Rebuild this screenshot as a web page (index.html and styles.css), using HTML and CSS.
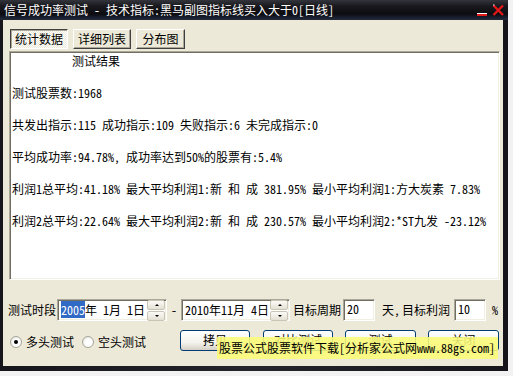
FILE: index.html
```html
<!DOCTYPE html>
<html>
<head>
<meta charset="utf-8">
<link rel="stylesheet" href="styles.css">
</head>
<body>
<div class="window">
  <div class="titlebar">
    <span class="title">信号成功率测试 - 技术指标:黑马副图指标线买入大于0[日线]</span>
    <svg class="ctrls" width="30" height="14" viewBox="0 0 30 14">
      <rect x="2" y="9" width="10" height="3" fill="#e01818"/>
      <rect x="2" y="9" width="10" height="1" fill="#ffffff"/>
      <path d="M18.5 1.5 L28 11 M28 1.5 L18.5 11" stroke="#e01818" stroke-width="2.4" fill="none"/>
      <path d="M18 1 L19.5 1" stroke="#ffffff" stroke-width="1"/>
    </svg>
  </div>
  <div class="body">
    <div class="tabs">
      <div class="tab pressed">统计数据</div>
      <div class="tab">详细列表</div>
      <div class="tab">分布图</div>
    </div>
    <div class="result">          测试结果

测试股票数:1968

共发出指示:115 成功指示:109 失败指示:6 未完成指示:0

平均成功率:94.78%, 成功率达到50%的股票有:5.4%

利润1总平均:41.18% 最大平均利润1:新 和 成 381.95% 最小平均利润1:方大炭素 7.83%

利润2总平均:22.64% 最大平均利润2:新 和 成 230.57% 最小平均利润2:*ST九发 -23.12%</div>
    <div class="row1">
      <span class="lbl l-period">测试时段</span>
      <div class="field date d1"><span class="val"><span class="sel">2005</span>年 1月 1日</span><div class="spin"><div class="sb up"></div><div class="sb dn"></div></div></div>
      <span class="lbl dash">-</span>
      <div class="field date d2"><span class="val">2010年11月 4日</span><div class="spin"><div class="sb up"></div><div class="sb dn"></div></div></div>
      <span class="lbl l-cycle">目标周期</span>
      <div class="field num n1">20</div>
      <span class="lbl l-day">天,</span>
      <span class="lbl l-profit">目标利润</span>
      <div class="field num n2">10</div>
      <span class="lbl l-pct">%</span>
    </div>
    <div class="row2">
      <span class="radio on"></span><span class="lbl r1">多头测试</span>
      <span class="radio r2b"></span><span class="lbl r2">空头测试</span>
      <div class="btn b1">拷贝</div>
      <div class="btn b2">对比测试</div>
      <div class="btn b3">测试</div>
      <div class="btn b4">关闭</div>
    </div>
  </div>
</div>
<div class="tip">股票公式股票软件下载[分析家公式网www.88gs.com]</div>
</body>
</html>
```

FILE: styles.css
```css
html, body {
  margin: 0;
  padding: 0;
  background: #f2f2f2;
}
body {
  width: 513px;
  height: 376px;
  overflow: hidden;
  position: relative;
  font-family: "Noto Sans Mono CJK SC", "Noto Sans CJK SC", monospace;
  font-size: 12px;
  color: #000;
}
.window {
  width: 508px;
  height: 371px;
  background: linear-gradient(90deg, #15151b, #24242c 50%, #15151b);
  display: flex;
  flex-direction: column;
}
.titlebar {
  height: 20px;
  flex: none;
  display: flex;
  align-items: center;
  background: linear-gradient(#34343c 0, #18181e 30%, #0c0c10 70%, #1a2232 90%, #232a3a 100%);
}
.title {
  color: #fff;
  padding-left: 4px;
  line-height: 12px;
  white-space: pre;
}
.ctrls {
  margin-left: auto;
  margin-right: 3px;
  margin-top: 1px;
}
.body {
  flex: 1;
  margin: 0 5px 5px 3px;
  background: #ece9d8;
  padding-top: 9px;
  display: flex;
  flex-direction: column;
}
.tabs {
  display: flex;
  gap: 5px;
  padding-left: 7px;
  height: 20px;
  margin-bottom: 2px;
}
.tab {
  width: 58px;
  height: 20px;
  box-sizing: border-box;
  display: flex;
  align-items: center;
  justify-content: center;
  border: 1px solid;
  border-color: #fff #404040 #404040 #fff;
  box-shadow: inset -1px -1px 0 #aca899;
  line-height: 12px;
}
.tab:nth-child(3) { width: 49px; }
.tab.pressed {
  border-color: #404040 #fff #fff #404040;
  box-shadow: inset 1px 1px 0 #aca899;
  background: repeating-conic-gradient(#ffffff 0 25%, #ece9d8 0 50%) 0 0 / 2px 2px;
}
.result {
  margin-left: 6px;
  width: 491px;
  height: 229px;
  box-sizing: border-box;
  background: #fff;
  border: 1px solid;
  border-color: #aca899 #fff #fff #aca899;
  box-shadow: inset 1px 1px 0 #716f64, inset -1px -1px 0 #f1efe2;
  padding: 1px 0 0 2px;
  white-space: pre;
  line-height: 16px;
}
.row1 {
  display: flex;
  align-items: center;
  height: 22px;
  margin-top: 19px;
}
.lbl {
  white-space: pre;
  line-height: 12px;
}
.l-period { margin-left: 5px; width: 48px; }
.field {
  height: 22px;
  box-sizing: border-box;
  background: #fff;
  border: 1px solid;
  border-color: #aca899 #fff #fff #aca899;
  box-shadow: inset 1px 1px 0 #716f64, inset -1px -1px 0 #f1efe2;
  display: flex;
  align-items: center;
}
.date { position: relative; }
.d1 { margin-left: 1px; width: 110px; }
.d2 { width: 109px; }
.val { padding-left: 3px; white-space: pre; line-height: 14px; }
.sel { background: #316ac5; color: #fff; }
.dash { width: 14px; text-align: center; }
.spin {
  margin-left: auto;
  margin-right: 1px;
  width: 18px;
  display: flex;
  flex-direction: column;
  gap: 1px;
}
.sb {
  height: 8px;
  background: linear-gradient(#fbfaf6, #e3e0d3);
  border: 1px solid #c9c5b6;
  border-radius: 2px;
  position: relative;
}
.sb::after {
  content: "";
  position: absolute;
  left: 7px;
  top: 3px;
  border-left: 2px solid transparent;
  border-right: 2px solid transparent;
}
.sb.up::after { border-bottom: 2px solid #000; }
.sb.dn::after { border-top: 2px solid #000; }
.l-cycle { margin-left: 3px; width: 48px; }
.num { padding-left: 3px; line-height: 14px; align-items: flex-start; padding-top: 2px; }
.n1 { margin-left: 2px; width: 32px; }
.l-day { margin-left: 7px; }
.l-profit { margin-left: 2px; }
.n2 { margin-left: 4px; width: 32px; }
.l-pct { margin-left: 6px; }
.row2 {
  display: flex;
  align-items: center;
  height: 21px;
  margin-top: 9px;
}
.radio {
  width: 12px;
  height: 12px;
  box-sizing: border-box;
  border-radius: 50%;
  border: 1px solid #a5a59a;
  background: radial-gradient(circle at 60% 60%, #fff 40%, #dcdad0 100%);
  margin-left: 7px;
  margin-top: 2px;
  position: relative;
}
.radio.on::after {
  content: "";
  position: absolute;
  left: 3px;
  top: 3px;
  width: 4px;
  height: 4px;
  border-radius: 50%;
  background: #000;
}
.r1 { margin-left: 4px; margin-top: 2px; }
.r2b { margin-left: 8px; }
.r2 { margin-left: 4px; margin-top: 2px; }
.btn {
  height: 21px;
  box-sizing: border-box;
  border: 1px solid #003c74;
  border-radius: 3px;
  background: linear-gradient(#ffffff 0, #f4f3ee 60%, #d6d0c5 100%);
  display: flex;
  align-items: center;
  justify-content: center;
  line-height: 12px;
  padding-bottom: 2px;
}
.b1 { margin-left: 34px; width: 70px; }
.b2 { margin-left: 13px; width: 70px; }
.b3 { margin-left: 12px; width: 71px; }
.b4 { margin-left: 12px; width: 71px; }
.tip {
  position: absolute;
  left: 217px;
  top: 337px;
  width: 281px;
  height: 22px;
  box-sizing: border-box;
  padding-left: 2px;
  background: rgba(250, 250, 120, 0.88);
  display: flex;
  align-items: center;
  white-space: pre;
  line-height: 12px;
}
```
